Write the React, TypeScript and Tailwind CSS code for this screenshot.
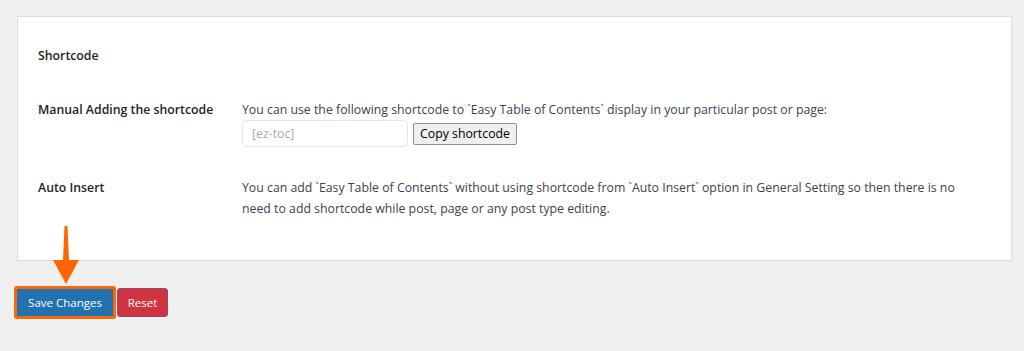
import React from "react";

export default function App() {
  return (
    <div
      className="relative w-[1024px] h-[351px] bg-[#f0f0f1] pt-[16px] text-[12.3px] text-[#3c434a]"
      style={{ fontFamily: '"Open Sans", "Noto Sans", sans-serif' }}
    >
      <div className="ml-[17px] w-[995px] h-[245px] border border-[#dcdcde] bg-white pl-[20px] pt-[28px]">
        <div className="h-[21px] leading-[21px] font-semibold text-[#1d2327]">Shortcode</div>
        <div className="mt-[33px] flex">
          <div className="w-[204px] h-[21px] leading-[21px] font-semibold text-[#1d2327]">
            Manual Adding the shortcode
          </div>
          <div className="flex flex-col">
            <div className="h-[21px] leading-[21px]">
              You can use the following shortcode to `Easy Table of Contents` display in your particular post or page:
            </div>
            <div className="flex items-center gap-[5px]">
              <div className="w-[166px] h-[27px] border border-[#e6e6e6] rounded-[4px] pl-[9px] leading-[25px] text-[#a7aaad]">
                [ez-toc]
              </div>
              <button className="h-[22px] w-[104px] border border-[#8f8f8f] rounded-[2px] bg-[#efefef] text-[12.3px] leading-[20px] text-black">
                Copy shortcode
              </button>
            </div>
          </div>
        </div>
        <div className="mt-[30px] flex">
          <div className="w-[204px] h-[21px] leading-[21px] font-semibold text-[#1d2327]">Auto Insert</div>
          <div className="w-[730px] leading-[21px]">
            You can add `Easy Table of Contents` without using shortcode from `Auto Insert` option in General Setting so then there is no need to add shortcode while post, page or any post type editing.
          </div>
        </div>
      </div>
      <div className="mt-[25px] ml-[14px] flex items-center gap-[1px]">
        <div className="border-[3px] border-[#ff6600] rounded-[3px]">
          <button className="block w-[96px] h-[27px] bg-[#2271b1] text-white text-[11.5px] leading-[27px]">
            Save Changes
          </button>
        </div>
        <button className="w-[51px] h-[29px] bg-[#d1343f] border border-[#8a4c7d] rounded-[3px] text-white text-[11.5px]">
          Reset
        </button>
      </div>
      <svg className="absolute left-[52px] top-[226px]" width="28" height="60" viewBox="0 0 28 60">
        <polygon points="12.5,0 15.5,0 17,34 27,34 14,58 1,34 11,34" fill="#ff6600" />
      </svg>
    </div>
  );
}
